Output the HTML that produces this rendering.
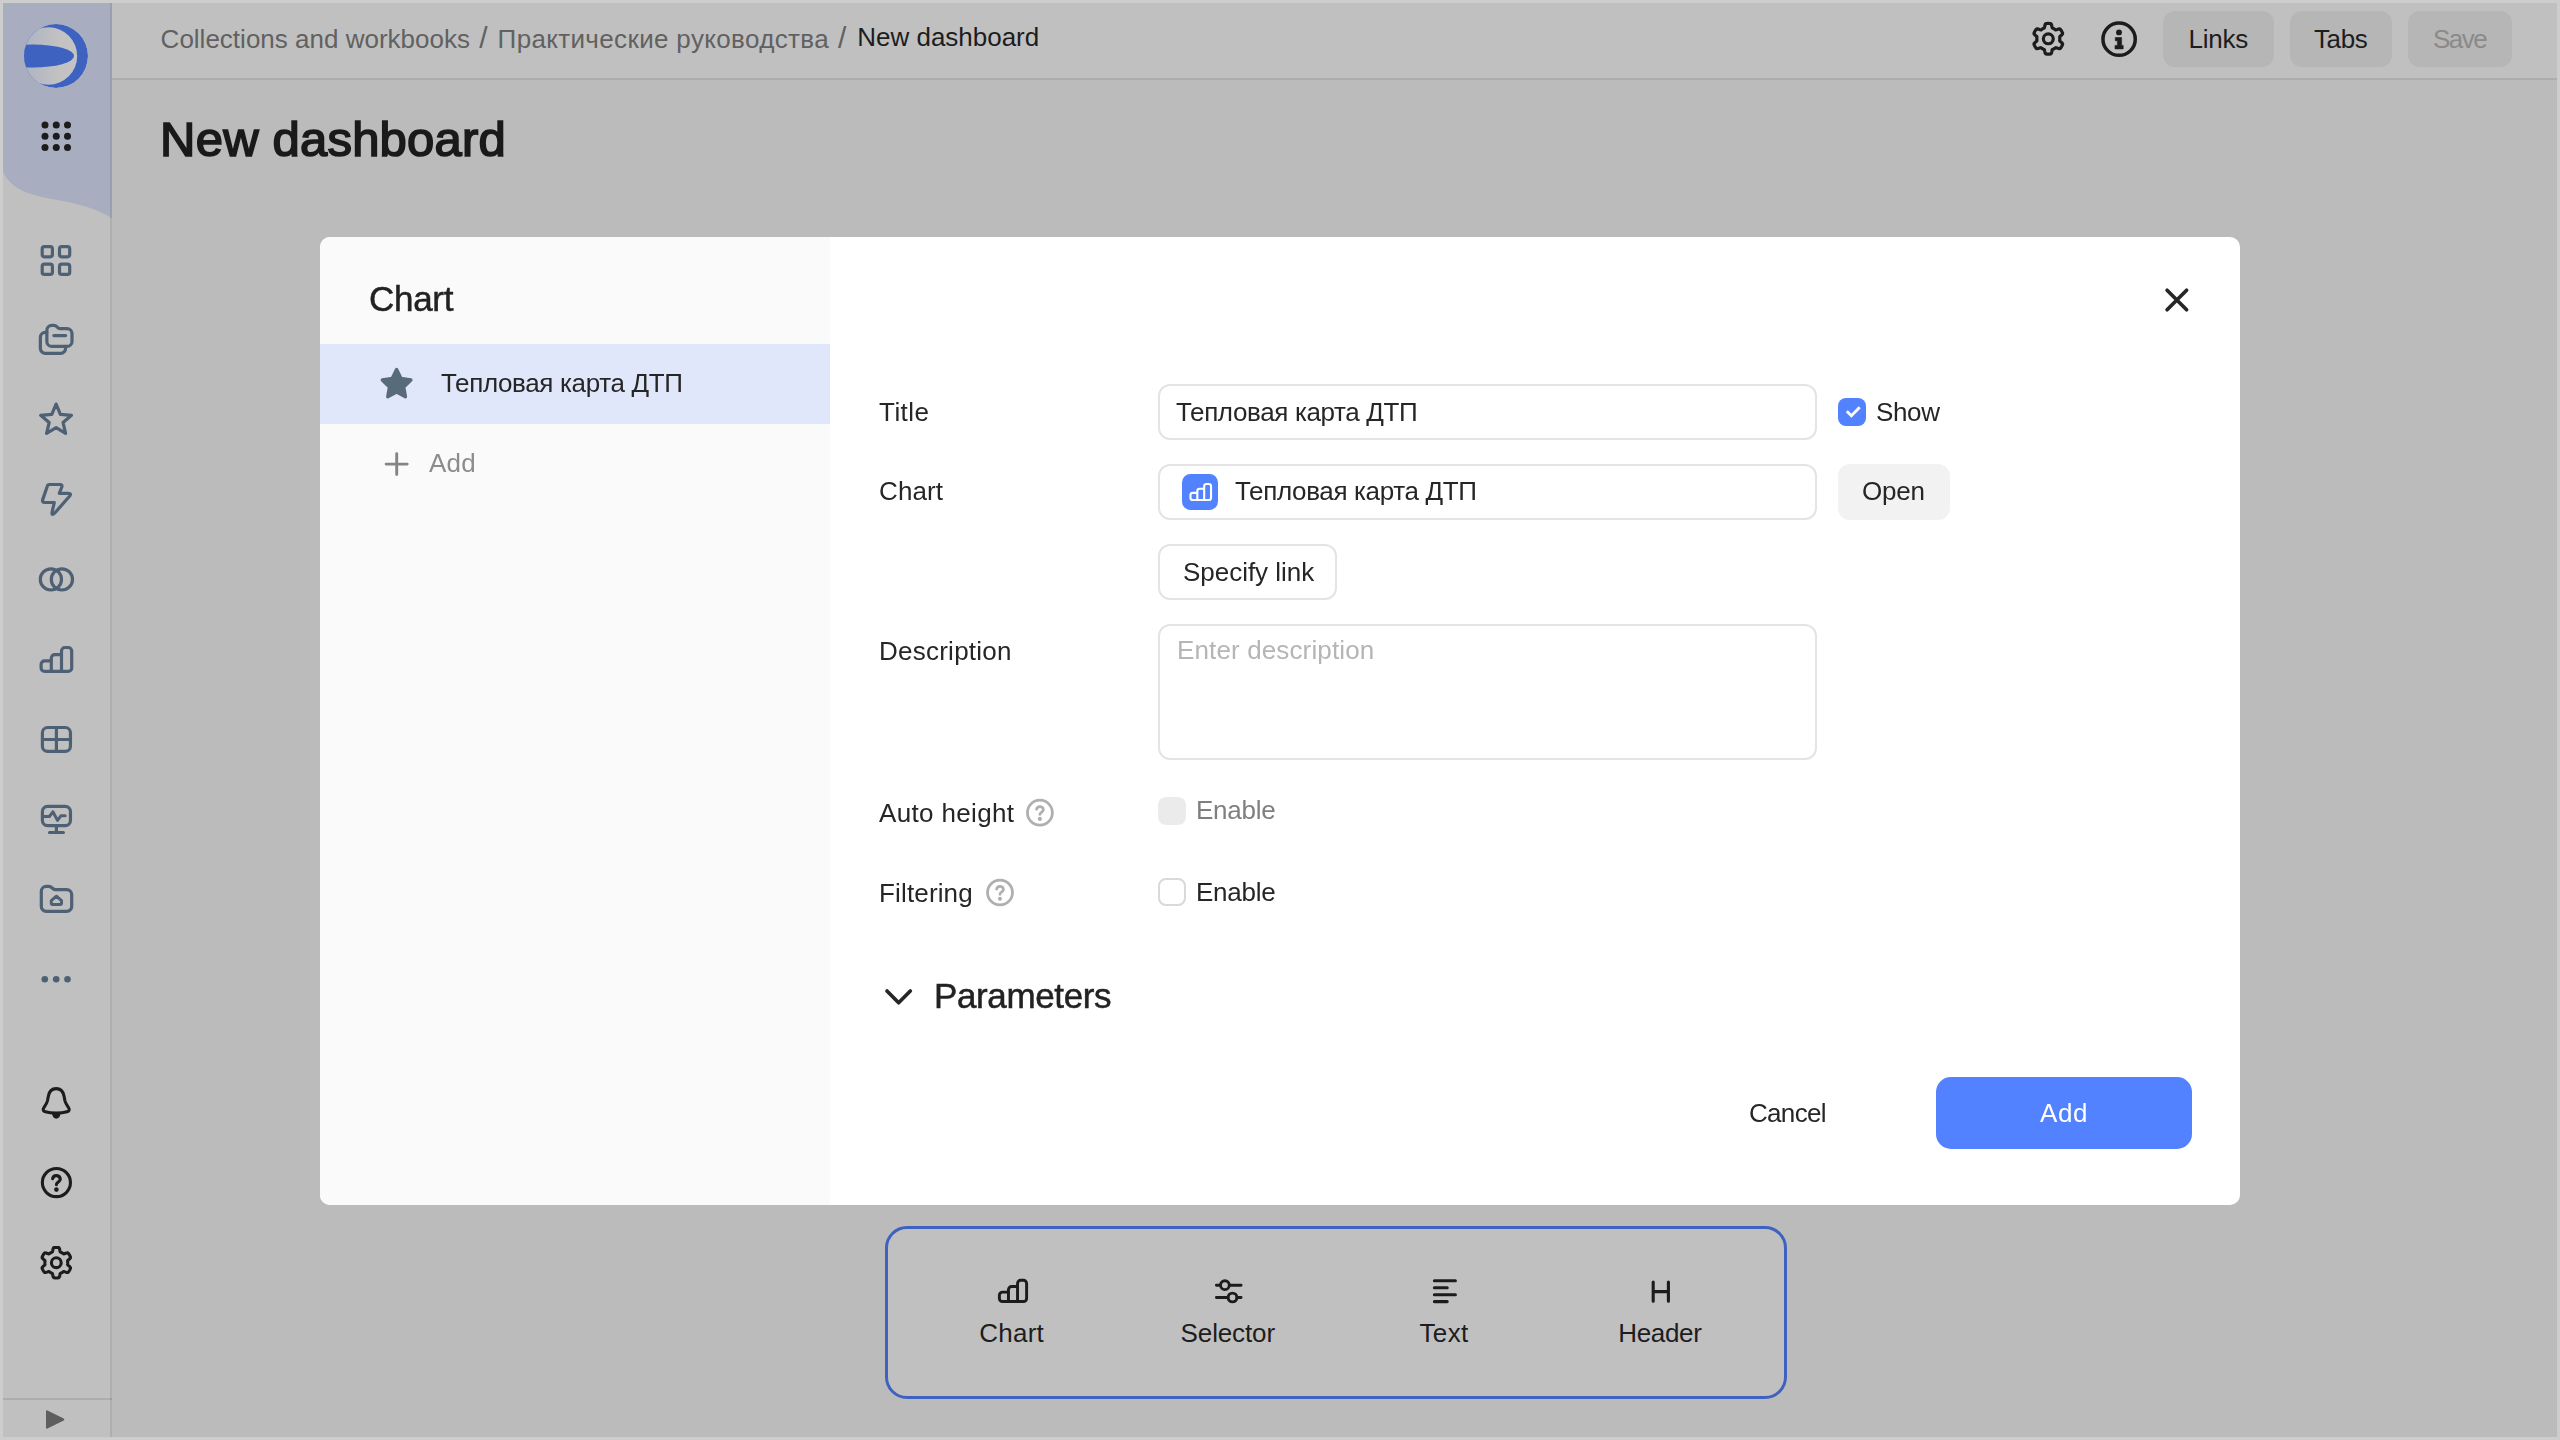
<!DOCTYPE html>
<html lang="en"><head><meta charset="utf-8"><title>New dashboard</title>
<style>
*{box-sizing:border-box;margin:0;padding:0}
html,body{width:2560px;height:1440px;overflow:hidden}
body{position:relative;background:#cdcdcd;font-family:"Liberation Sans",sans-serif;}
.abs,.t,svg{position:absolute}
.t{white-space:nowrap;}
#page{left:3px;top:3px;width:2554px;height:1434px;background:#bbbbbb}
#hdr{left:112px;top:3px;width:2445px;height:76px;background:#c0c0c0;border-bottom:2px solid #adadad;height:77px}
#side{left:3px;top:3px;width:109px;height:1434px;background:#c0c0c0}
#sideb{left:110px;top:3px;width:2px;height:1434px;background:rgba(0,0,0,0.085)}
#sidefoot{left:3px;top:1398px;width:109px;height:2px;background:#adadad}
.hbtn{top:11px;height:56px;border-radius:12px;background:#b6b6b6}
#modal{left:320px;top:237px;width:1920px;height:968px;border-radius:10px;background:#fff;overflow:hidden}
#mleft{left:0;top:0;width:510px;height:968px;background:#fafafa}
#msel{left:0;top:107px;width:510px;height:80px;background:#e1e7fb}
.inp{border:2px solid #e4e4e4;border-radius:12px;background:#fff}
.cb{width:28px;height:28px;border-radius:8px}
#tool{left:885px;top:1226px;width:902px;height:173px;border:3px solid #3e62bf;border-radius:22px;background:#c0c0c0}
.g{will-change:transform}

</style></head>
<body>
<div class="abs" id="page"></div>
<div class="abs" id="hdr"></div>
<div class="abs" id="side"></div>
<div class="abs" id="sidefoot"></div>
<!--SIDEBAR-ICONS-->
<div class="abs hbtn" style="left:2163px;width:111px"></div>
<div class="abs hbtn" style="left:2290px;width:102px"></div>
<div class="abs hbtn" style="left:2408px;width:104px"></div>
<!--HEADER-ICONS-->
<div class="abs" id="tool"></div>
<!--TOOL-ICONS-->
<div class="abs" id="modal">
  <div class="abs" id="mleft"></div>
  <div class="abs" id="msel"></div>
</div>
<div class="abs inp" style="left:1158px;top:384px;width:659px;height:56px"></div>
<div class="abs inp" style="left:1158px;top:464px;width:659px;height:56px"></div>
<div class="abs inp" style="left:1158px;top:544px;width:179px;height:56px"></div>
<div class="abs inp" style="left:1158px;top:624px;width:659px;height:136px"></div>
<div class="abs" style="left:1838px;top:464px;width:112px;height:56px;border-radius:12px;background:#f2f2f2"></div>
<div class="abs cb" style="left:1838px;top:398px;background:#5282ff"></div>
<div class="abs cb" style="left:1158px;top:797px;background:#ebebeb"></div>
<div class="abs cb" style="left:1158px;top:878px;background:#fff;border:2px solid #d9d9d9"></div>
<div class="abs" style="left:1182px;top:473.5px;width:36px;height:36.5px;border-radius:8.5px;background:#5282ff"></div>
<div class="abs" style="left:1936px;top:1077px;width:256px;height:72px;border-radius:15px;background:#5282ff"></div>
<!--MODAL-ICONS-->
<svg style="left:0;top:0" width="2560" height="1440" viewBox="0 0 2560 1440"><path d="M3,3 H112 V218.5 C96,208 78,203.5 52,199 C30,195 12,190 3,172 Z" fill="#a8aebf"/>
<defs><linearGradient id="lg" x1="0" x2="1" y1="0" y2="0"><stop offset="0" stop-color="#aeb3c3"/><stop offset="0.55" stop-color="#c2c2c2"/><stop offset="1" stop-color="#c5c5c5"/></linearGradient><clipPath id="lc"><circle cx="56" cy="56" r="32"/></clipPath></defs>
<circle cx="56" cy="56" r="32" fill="url(#lg)"/>
<g clip-path="url(#lc)" fill="#3e62c0"><path fill-rule="evenodd" d="M56,24 a32,32 0 1 1 0,64 a32,32 0 1 1 0,-64 Z M48.5,27.3 a28.7,28.7 0 1 0 0,57.4 a28.7,28.7 0 1 0 0,-57.4 Z"/><ellipse cx="33" cy="56" rx="41" ry="11.5"/></g>
<path d="M40,28 A32,32 0 0 0 26,45 L26,45 Q40,43 40,28Z" fill="none"/>
<circle cx="45" cy="125" r="3.5" fill="#1c1c1c"/>
<circle cx="56.25" cy="125" r="3.5" fill="#1c1c1c"/>
<circle cx="67.5" cy="125" r="3.5" fill="#1c1c1c"/>
<circle cx="45" cy="136.25" r="3.5" fill="#1c1c1c"/>
<circle cx="56.25" cy="136.25" r="3.5" fill="#1c1c1c"/>
<circle cx="67.5" cy="136.25" r="3.5" fill="#1c1c1c"/>
<circle cx="45" cy="147.5" r="3.5" fill="#1c1c1c"/>
<circle cx="56.25" cy="147.5" r="3.5" fill="#1c1c1c"/>
<circle cx="67.5" cy="147.5" r="3.5" fill="#1c1c1c"/>
<g fill="none" stroke="#4e6074" stroke-width="3.2" stroke-linejoin="round" stroke-linecap="round">
<rect x="42.2" y="246.6" width="10.2" height="10.2" rx="2.2"/>
<rect x="59.5" y="246.6" width="10.2" height="10.2" rx="2.2"/>
<rect x="42.2" y="264.2" width="10.2" height="10.2" rx="2.2"/>
<rect x="59.5" y="264.2" width="10.2" height="10.2" rx="2.2"/>
<path d="M46.85,341.4 V330.4 a5,5 0 0 1 5,-5 H53.6 c2.2,0 3.2,1.2 4.2,2.2 c0.9,0.9 1.6,1.1 2.8,1.1 H67 a5,5 0 0 1 5,5 V341.4 a5,5 0 0 1 -5,5 H51.85 a5,5 0 0 1 -5,-5 Z"/>
<path d="M46.85,332.45 H45.35 a5,5 0 0 0 -5,5 V348.35 a5,5 0 0 0 5,5 H60.6 a5,5 0 0 0 5,-5 V346.4"/>
<path d="M53.9,335.6 H65.6"/>
<polygon points="56.10,404.10 60.39,414.39 71.51,415.29 63.04,422.56 65.62,433.41 56.10,427.60 46.58,433.41 49.16,422.56 40.69,415.29 51.81,414.39"/>
<path d="M49.6,484.5 H60 Q62.6,484.5 61.8,487 L59.3,493.3 H68.3 Q72,493.3 69.5,496.3 L54.6,513.2 Q51.4,516.2 52.1,512 L54.3,502.5 H44.8 Q41.7,502.5 42.8,499.4 L47.2,486.4 Q47.6,484.5 49.6,484.5 Z"/>
<circle cx="50.9" cy="579.4" r="10.6"/><circle cx="61.9" cy="579.4" r="10.6"/>
</g>
<g fill="none" stroke="#4e6074" stroke-width="3.2" stroke-linejoin="round"><path d="M51.3,660.8 H44.6 a3.5,3.5 0 0 0 -3.5,3.5 V667.9 a3.5,3.5 0 0 0 3.5,3.5 H68.2 a3.5,3.5 0 0 0 3.5,-3.5 V651 a3.5,3.5 0 0 0 -3.5,-3.5 H65 a3.5,3.5 0 0 0 -3.5,3.5 V671.4"/><path d="M61.5,654.6 H54.8 a3.5,3.5 0 0 0 -3.5,3.5 V671.4"/></g>
<g fill="none" stroke="#4e6074" stroke-width="3.2" stroke-linejoin="round" stroke-linecap="round">
<rect x="42.4" y="727.5" width="28.05" height="23.9" rx="5.2"/><path d="M56.4,727.5 V751.4 M42.4,739.5 H70.45"/>
<rect x="42.4" y="806.4" width="28.05" height="19.3" rx="5.2"/><path d="M56.4,825.7 V832.5 M49.5,832.5 H63.4"/>
<path d="M42.4,816.5 H49.4 L52.9,811.8 L57.5,820.4 L61,815.7 H65.2" stroke-width="3"/>
<path d="M41.3,906.4 V891.4 a5,5 0 0 1 5,-5 H48.6 c2.2,0 3.2,1.1 4.2,2.1 c0.9,0.9 1.6,1.2 2.8,1.2 H66.7 a5,5 0 0 1 5,5 V906.4 a5,5 0 0 1 -5,5 H46.3 a5,5 0 0 1 -5,-5 Z"/>
<path d="M56.4,896.2 L61.5,900.6 V903.6 a0.9,0.9 0 0 1 -0.9,0.9 H52.2 a0.9,0.9 0 0 1 -0.9,-0.9 V900.6 Z" stroke-width="3"/>
</g>
<circle cx="44.8" cy="979.2" r="3.3" fill="#4e6074"/>
<circle cx="56.2" cy="979.2" r="3.3" fill="#4e6074"/>
<circle cx="67.5" cy="979.2" r="3.3" fill="#4e6074"/>
<path d="M43.9,1107.5 C46,1104.5 46.8,1103.5 47.4,1101 L48.4,1096 C49.2,1091.5 52,1088.6 56.2,1088.6 C60.4,1088.6 63.2,1091.5 64,1096 L65,1101 C65.6,1103.5 66.4,1104.5 68.5,1107.5 C70,1109.8 69,1111.3 67,1111.8 C61,1113.6 51.4,1113.6 45.4,1111.8 C43.4,1111.3 42.4,1109.8 43.9,1107.5 Z" fill="none" stroke="#1c1c1c" stroke-width="3.1" stroke-linejoin="round"/>
<path d="M52,1113.8 Q53,1118.7 56.2,1118.7 Q59.6,1118.7 60.6,1113.8 Z" fill="#1c1c1c"/>
<g fill="none" stroke="#1c1c1c" stroke-width="3.1" stroke-linecap="round"><circle cx="56.4" cy="1182.6" r="14.05"/><path d="M52.6,1178.7 A3.9,3.9 0 0 1 60.3,1179.3 C60.3,1181.9 56.4,1181.8 56.4,1184.6"/></g><circle cx="56.4" cy="1189.6" r="2.3" fill="#1c1c1c"/>
<path d="M67.70,1262.70 L67.70,1262.40 L67.68,1262.10 L67.66,1261.81 L67.64,1261.51 L67.60,1261.21 L67.57,1260.92 L67.69,1260.59 L68.04,1260.20 L68.56,1259.76 L69.17,1259.25 L69.76,1258.71 L70.23,1258.17 L70.50,1257.67 L70.53,1257.24 L70.39,1256.86 L70.23,1256.50 L70.06,1256.13 L69.89,1255.78 L69.70,1255.42 L69.51,1255.08 L69.30,1254.73 L69.09,1254.39 L68.87,1254.06 L68.64,1253.74 L68.40,1253.42 L68.15,1253.11 L67.75,1252.92 L67.18,1252.90 L66.48,1253.04 L65.72,1253.28 L64.98,1253.55 L64.33,1253.78 L63.83,1253.89 L63.48,1253.83 L63.24,1253.66 L63.00,1253.48 L62.76,1253.30 L62.51,1253.14 L62.26,1252.98 L62.00,1252.83 L61.74,1252.68 L61.48,1252.54 L61.21,1252.41 L60.94,1252.29 L60.66,1252.17 L60.39,1252.05 L60.17,1251.78 L60.01,1251.28 L59.88,1250.61 L59.75,1249.83 L59.58,1249.05 L59.34,1248.38 L59.04,1247.89 L58.68,1247.65 L58.29,1247.58 L57.89,1247.53 L57.50,1247.50 L57.10,1247.47 L56.70,1247.46 L56.30,1247.45 L55.90,1247.46 L55.50,1247.47 L55.10,1247.50 L54.71,1247.53 L54.31,1247.58 L53.92,1247.65 L53.56,1247.89 L53.26,1248.38 L53.02,1249.05 L52.85,1249.83 L52.72,1250.61 L52.59,1251.28 L52.43,1251.78 L52.21,1252.05 L51.94,1252.17 L51.66,1252.29 L51.39,1252.41 L51.12,1252.54 L50.86,1252.68 L50.60,1252.83 L50.34,1252.98 L50.09,1253.14 L49.84,1253.30 L49.60,1253.48 L49.36,1253.66 L49.12,1253.83 L48.77,1253.89 L48.27,1253.78 L47.62,1253.55 L46.88,1253.28 L46.12,1253.04 L45.42,1252.90 L44.85,1252.92 L44.45,1253.11 L44.20,1253.42 L43.96,1253.74 L43.73,1254.06 L43.51,1254.39 L43.30,1254.73 L43.09,1255.08 L42.90,1255.42 L42.71,1255.78 L42.54,1256.13 L42.37,1256.50 L42.21,1256.86 L42.07,1257.24 L42.10,1257.67 L42.37,1258.17 L42.84,1258.71 L43.43,1259.25 L44.04,1259.76 L44.56,1260.20 L44.91,1260.59 L45.03,1260.92 L45.00,1261.21 L44.96,1261.51 L44.94,1261.81 L44.92,1262.10 L44.90,1262.40 L44.90,1262.70 L44.90,1263.00 L44.92,1263.30 L44.94,1263.59 L44.96,1263.89 L45.00,1264.19 L45.03,1264.48 L44.91,1264.81 L44.56,1265.20 L44.04,1265.64 L43.43,1266.15 L42.84,1266.69 L42.37,1267.23 L42.10,1267.73 L42.07,1268.16 L42.21,1268.54 L42.37,1268.90 L42.54,1269.27 L42.71,1269.62 L42.90,1269.98 L43.09,1270.33 L43.30,1270.67 L43.51,1271.01 L43.73,1271.34 L43.96,1271.66 L44.20,1271.98 L44.45,1272.29 L44.85,1272.48 L45.42,1272.50 L46.12,1272.36 L46.88,1272.12 L47.62,1271.85 L48.27,1271.62 L48.77,1271.51 L49.12,1271.57 L49.36,1271.74 L49.60,1271.92 L49.84,1272.10 L50.09,1272.26 L50.34,1272.42 L50.60,1272.57 L50.86,1272.72 L51.12,1272.86 L51.39,1272.99 L51.66,1273.11 L51.94,1273.23 L52.21,1273.35 L52.43,1273.62 L52.59,1274.12 L52.72,1274.79 L52.85,1275.57 L53.02,1276.35 L53.26,1277.02 L53.56,1277.51 L53.92,1277.75 L54.31,1277.82 L54.71,1277.87 L55.10,1277.90 L55.50,1277.93 L55.90,1277.94 L56.30,1277.95 L56.70,1277.94 L57.10,1277.93 L57.50,1277.90 L57.89,1277.87 L58.29,1277.82 L58.68,1277.75 L59.04,1277.51 L59.34,1277.02 L59.58,1276.35 L59.75,1275.57 L59.88,1274.79 L60.01,1274.12 L60.17,1273.62 L60.39,1273.35 L60.66,1273.23 L60.94,1273.11 L61.21,1272.99 L61.48,1272.86 L61.74,1272.72 L62.00,1272.57 L62.26,1272.42 L62.51,1272.26 L62.76,1272.10 L63.00,1271.92 L63.24,1271.74 L63.48,1271.57 L63.83,1271.51 L64.33,1271.62 L64.98,1271.85 L65.72,1272.12 L66.48,1272.36 L67.18,1272.50 L67.75,1272.48 L68.15,1272.29 L68.40,1271.98 L68.64,1271.66 L68.87,1271.34 L69.09,1271.01 L69.30,1270.67 L69.51,1270.33 L69.70,1269.98 L69.89,1269.62 L70.06,1269.27 L70.23,1268.90 L70.39,1268.54 L70.53,1268.16 L70.50,1267.73 L70.23,1267.23 L69.76,1266.69 L69.17,1266.15 L68.56,1265.64 L68.04,1265.20 L67.69,1264.81 L67.57,1264.48 L67.60,1264.19 L67.64,1263.89 L67.66,1263.59 L67.68,1263.30 L67.70,1263.00Z" fill="none" stroke="#1c1c1c" stroke-width="3.1" stroke-linejoin="round"/><circle cx="56.3" cy="1262.7" r="4.9" fill="none" stroke="#1c1c1c" stroke-width="3.1"/>
<path d="M47,1411.3 L63.3,1419.5 L47,1427.7 Z" fill="#5e5e5e" stroke="#5e5e5e" stroke-width="2" stroke-linejoin="round"/>
<path d="M2059.80,38.80 L2059.80,38.50 L2059.78,38.20 L2059.76,37.90 L2059.74,37.60 L2059.70,37.30 L2059.67,37.00 L2059.79,36.67 L2060.14,36.28 L2060.66,35.83 L2061.27,35.33 L2061.86,34.78 L2062.32,34.24 L2062.59,33.74 L2062.62,33.30 L2062.48,32.93 L2062.32,32.56 L2062.15,32.19 L2061.98,31.83 L2061.79,31.48 L2061.59,31.12 L2061.39,30.78 L2061.17,30.44 L2060.95,30.11 L2060.72,29.78 L2060.48,29.46 L2060.22,29.14 L2059.83,28.95 L2059.26,28.93 L2058.56,29.07 L2057.79,29.31 L2057.05,29.58 L2056.40,29.80 L2055.89,29.91 L2055.54,29.86 L2055.30,29.68 L2055.06,29.50 L2054.81,29.32 L2054.56,29.16 L2054.31,28.99 L2054.05,28.84 L2053.79,28.69 L2053.52,28.55 L2053.25,28.42 L2052.98,28.29 L2052.70,28.18 L2052.42,28.06 L2052.20,27.78 L2052.04,27.29 L2051.91,26.61 L2051.77,25.83 L2051.60,25.05 L2051.37,24.38 L2051.06,23.89 L2050.70,23.65 L2050.30,23.58 L2049.90,23.53 L2049.50,23.50 L2049.10,23.47 L2048.70,23.46 L2048.30,23.45 L2047.90,23.46 L2047.50,23.47 L2047.10,23.50 L2046.70,23.53 L2046.30,23.58 L2045.90,23.65 L2045.54,23.89 L2045.23,24.38 L2045.00,25.05 L2044.83,25.83 L2044.69,26.61 L2044.56,27.29 L2044.40,27.78 L2044.18,28.06 L2043.90,28.18 L2043.62,28.29 L2043.35,28.42 L2043.08,28.55 L2042.81,28.69 L2042.55,28.84 L2042.29,28.99 L2042.04,29.16 L2041.79,29.32 L2041.54,29.50 L2041.30,29.68 L2041.06,29.86 L2040.71,29.91 L2040.20,29.80 L2039.55,29.58 L2038.81,29.31 L2038.04,29.07 L2037.34,28.93 L2036.77,28.95 L2036.38,29.14 L2036.12,29.46 L2035.88,29.78 L2035.65,30.11 L2035.43,30.44 L2035.21,30.78 L2035.01,31.12 L2034.81,31.48 L2034.62,31.83 L2034.45,32.19 L2034.28,32.56 L2034.12,32.93 L2033.98,33.30 L2034.01,33.74 L2034.28,34.24 L2034.74,34.78 L2035.33,35.33 L2035.94,35.83 L2036.46,36.28 L2036.81,36.67 L2036.93,37.00 L2036.90,37.30 L2036.86,37.60 L2036.84,37.90 L2036.82,38.20 L2036.80,38.50 L2036.80,38.80 L2036.80,39.10 L2036.82,39.40 L2036.84,39.70 L2036.86,40.00 L2036.90,40.30 L2036.93,40.60 L2036.81,40.93 L2036.46,41.32 L2035.94,41.77 L2035.33,42.27 L2034.74,42.82 L2034.28,43.36 L2034.01,43.86 L2033.98,44.30 L2034.12,44.67 L2034.28,45.04 L2034.45,45.41 L2034.62,45.77 L2034.81,46.12 L2035.01,46.47 L2035.21,46.82 L2035.43,47.16 L2035.65,47.49 L2035.88,47.82 L2036.12,48.14 L2036.38,48.46 L2036.77,48.65 L2037.34,48.67 L2038.04,48.53 L2038.81,48.29 L2039.55,48.02 L2040.20,47.80 L2040.71,47.69 L2041.06,47.74 L2041.30,47.92 L2041.54,48.10 L2041.79,48.28 L2042.04,48.44 L2042.29,48.61 L2042.55,48.76 L2042.81,48.91 L2043.08,49.05 L2043.35,49.18 L2043.62,49.31 L2043.90,49.42 L2044.18,49.54 L2044.40,49.82 L2044.56,50.31 L2044.69,50.99 L2044.83,51.77 L2045.00,52.55 L2045.23,53.22 L2045.54,53.71 L2045.90,53.95 L2046.30,54.02 L2046.70,54.07 L2047.10,54.10 L2047.50,54.13 L2047.90,54.14 L2048.30,54.15 L2048.70,54.14 L2049.10,54.13 L2049.50,54.10 L2049.90,54.07 L2050.30,54.02 L2050.70,53.95 L2051.06,53.71 L2051.37,53.22 L2051.60,52.55 L2051.77,51.77 L2051.91,50.99 L2052.04,50.31 L2052.20,49.82 L2052.42,49.54 L2052.70,49.42 L2052.98,49.31 L2053.25,49.18 L2053.52,49.05 L2053.79,48.91 L2054.05,48.76 L2054.31,48.61 L2054.56,48.44 L2054.81,48.28 L2055.06,48.10 L2055.30,47.92 L2055.54,47.74 L2055.89,47.69 L2056.40,47.80 L2057.05,48.02 L2057.79,48.29 L2058.56,48.53 L2059.26,48.67 L2059.83,48.65 L2060.22,48.46 L2060.48,48.14 L2060.72,47.82 L2060.95,47.49 L2061.17,47.16 L2061.39,46.82 L2061.59,46.47 L2061.79,46.12 L2061.98,45.77 L2062.15,45.41 L2062.32,45.04 L2062.48,44.67 L2062.62,44.30 L2062.59,43.86 L2062.32,43.36 L2061.86,42.82 L2061.27,42.27 L2060.66,41.77 L2060.14,41.32 L2059.79,40.93 L2059.67,40.60 L2059.70,40.30 L2059.74,40.00 L2059.76,39.70 L2059.78,39.40 L2059.80,39.10Z" fill="none" stroke="#1c1c1c" stroke-width="3.2" stroke-linejoin="round"/><circle cx="2048.3" cy="38.8" r="4.95" fill="none" stroke="#1c1c1c" stroke-width="3.2"/>
<circle cx="2119.1" cy="39.2" r="16.15" fill="none" stroke="#1c1c1c" stroke-width="3.5"/>
<circle cx="2119" cy="32.4" r="2.95" fill="#1c1c1c"/>
<path d="M2115.3,37.5 H2121.6 V45.4 H2123.2 V48.9 H2115 V45.4 H2117.4 V40.8 H2115.3 Z" fill="#1c1c1c" stroke="#1c1c1c" stroke-width="0.6" stroke-linejoin="round"/>
<polygon points="396.60,369.60 401.01,378.53 410.87,379.96 403.73,386.92 405.42,396.74 396.60,392.10 387.78,396.74 389.47,386.92 382.33,379.96 392.19,378.53" fill="#586b7d" stroke="#586b7d" stroke-width="3.4" stroke-linejoin="round"/>
<path d="M396.7,453.6 V474.6 M386.1,464.1 H407.2" stroke="#858585" stroke-width="2.9" stroke-linecap="round" fill="none"/>
<path d="M2167.1,290.2 L2186.6,309.7 M2186.6,290.2 L2167.1,309.7" stroke="#262626" stroke-width="3.7" stroke-linecap="round" fill="none"/>
<g transform="translate(1200.75,492) scale(0.672) translate(-56.4,-659.45)"><g fill="none" stroke="#fff" stroke-width="3.2" stroke-linejoin="round"><path d="M51.3,660.8 H44.6 a3.5,3.5 0 0 0 -3.5,3.5 V667.9 a3.5,3.5 0 0 0 3.5,3.5 H68.2 a3.5,3.5 0 0 0 3.5,-3.5 V651 a3.5,3.5 0 0 0 -3.5,-3.5 H65 a3.5,3.5 0 0 0 -3.5,3.5 V671.4"/><path d="M61.5,654.6 H54.8 a3.5,3.5 0 0 0 -3.5,3.5 V671.4"/></g></g>
<path d="M1846.8,411.2 L1851.4,415.8 L1859.7,407.2" stroke="#fff" stroke-width="2.8" fill="none"/>
<g transform="translate(1039.9,812.7) scale(0.888) translate(-56.4,-1182.6)"><g fill="none" stroke="#afafaf" stroke-width="3.1" stroke-linecap="round"><circle cx="56.4" cy="1182.6" r="14.05"/><path d="M52.6,1178.7 A3.9,3.9 0 0 1 60.3,1179.3 C60.3,1181.9 56.4,1181.8 56.4,1184.6"/></g><circle cx="56.4" cy="1189.6" r="2.3" fill="#afafaf"/></g>
<g transform="translate(1000,892.5) scale(0.888) translate(-56.4,-1182.6)"><g fill="none" stroke="#afafaf" stroke-width="3.1" stroke-linecap="round"><circle cx="56.4" cy="1182.6" r="14.05"/><path d="M52.6,1178.7 A3.9,3.9 0 0 1 60.3,1179.3 C60.3,1181.9 56.4,1181.8 56.4,1184.6"/></g><circle cx="56.4" cy="1189.6" r="2.3" fill="#afafaf"/></g>
<path d="M887,991 L898.65,1002.7 L910.3,991" stroke="#262626" stroke-width="3.7" stroke-linecap="round" stroke-linejoin="round" fill="none"/>
<g transform="translate(1013,1290.9) scale(0.89) translate(-56.4,-659.45)"><g fill="none" stroke="#1c1c1c" stroke-width="3.3" stroke-linejoin="round"><path d="M51.3,660.8 H44.6 a3.5,3.5 0 0 0 -3.5,3.5 V667.9 a3.5,3.5 0 0 0 3.5,3.5 H68.2 a3.5,3.5 0 0 0 3.5,-3.5 V651 a3.5,3.5 0 0 0 -3.5,-3.5 H65 a3.5,3.5 0 0 0 -3.5,3.5 V671.4"/><path d="M61.5,654.6 H54.8 a3.5,3.5 0 0 0 -3.5,3.5 V671.4"/></g></g>
<g fill="none" stroke="#1c1c1c" stroke-width="2.9" stroke-linecap="round"><path d="M1216.4,1285.2 H1220.5 M1229.3,1285.2 H1241.1 M1216.4,1297.5 H1228.1 M1236.9,1297.5 H1241.1"/><circle cx="1224.9" cy="1285.2" r="4.4"/><circle cx="1232.5" cy="1297.5" r="4.4"/></g>
<path d="M1434.4,1280.7 H1455.4 M1434.4,1287.8 H1447.2 M1434.4,1294.7 H1455.4 M1434.4,1301.6 H1447.2" stroke="#1c1c1c" stroke-width="3.1" stroke-linecap="round" fill="none"/>
<path d="M1653.2,1282 V1301.3 M1668.4,1282 V1301.3 M1653.2,1291.6 H1668.4" stroke="#1c1c1c" stroke-width="3.1" stroke-linecap="round" fill="none"/></svg>
<div class="abs" id="sideb"></div>

<div class="t" id="bc1" style="left:160.60px;top:20.59px;font-size:26px;line-height:36px;color:#616161;letter-spacing:0.005px;">Collections and workbooks</div>
<div class="t" id="bs1" style="left:479.30px;top:17.00px;font-size:30px;line-height:42px;color:#616161;letter-spacing:1.556px;">/</div>
<div class="t" id="bc2" style="left:497.60px;top:20.59px;font-size:26px;line-height:36px;color:#616161;letter-spacing:0.345px;">Практические руководства</div>
<div class="t" id="bs2" style="left:838.00px;top:17.00px;font-size:30px;line-height:42px;color:#616161;letter-spacing:1.356px;">/</div>
<div class="t" id="bc3" style="left:857.30px;top:19.29px;font-size:26px;line-height:36px;color:#1d1d1d;letter-spacing:-0.019px;">New dashboard</div>
<div class="t" id="ttl" style="left:160.10px;top:105.21px;font-size:49px;line-height:69px;color:#1a1a1a;-webkit-text-stroke:1.7px #1a1a1a;letter-spacing:0.203px;">New dashboard</div>
<div class="t" id="links" style="left:2188.50px;top:20.99px;font-size:26px;line-height:36px;color:#1d1d1d;letter-spacing:-0.238px;">Links</div>
<div class="t" id="tabs" style="left:2313.90px;top:20.99px;font-size:26px;line-height:36px;color:#1d1d1d;letter-spacing:-0.341px;">Tabs</div>
<div class="t" id="save" style="left:2433.00px;top:20.99px;font-size:26px;line-height:36px;color:#8a8a8a;letter-spacing:-1.489px;">Save</div>
<div class="t g" id="mh" style="left:368.80px;top:274.17px;font-size:35px;line-height:49px;color:#222;-webkit-text-stroke:0.5px #222;letter-spacing:-0.298px;">Chart</div>
<div class="t g" id="li" style="left:441.00px;top:364.99px;font-size:26px;line-height:36px;color:#262626;letter-spacing:-0.356px;">Тепловая карта ДТП</div>
<div class="t g" id="ladd" style="left:429.00px;top:444.89px;font-size:26px;line-height:36px;color:#8c8c8c;letter-spacing:0.217px;">Add</div>
<div class="t g" id="f1" style="left:878.75px;top:394.24px;font-size:26px;line-height:36px;color:#262626;letter-spacing:0.461px;">Title</div>
<div class="t g" id="f1v" style="left:1176.25px;top:394.24px;font-size:26px;line-height:36px;color:#262626;letter-spacing:-0.365px;">Тепловая карта ДТП</div>
<div class="t g" id="show" style="left:1876.00px;top:394.24px;font-size:26px;line-height:36px;color:#262626;letter-spacing:-0.349px;">Show</div>
<div class="t g" id="f2" style="left:878.50px;top:473.49px;font-size:26px;line-height:36px;color:#262626;letter-spacing:0.105px;">Chart</div>
<div class="t g" id="f2v" style="left:1235.00px;top:473.49px;font-size:26px;line-height:36px;color:#262626;letter-spacing:-0.350px;">Тепловая карта ДТП</div>
<div class="t g" id="open" style="left:1862.00px;top:473.49px;font-size:26px;line-height:36px;color:#262626;letter-spacing:-0.203px;">Open</div>
<div class="t g" id="spec" style="left:1182.50px;top:554.24px;font-size:26px;line-height:36px;color:#262626;letter-spacing:-0.023px;">Specify link</div>
<div class="t g" id="f3" style="left:878.50px;top:633.49px;font-size:26px;line-height:36px;color:#262626;letter-spacing:0.244px;">Description</div>
<div class="t g" id="f3p" style="left:1176.60px;top:631.99px;font-size:26px;line-height:36px;color:#b5b5b5;letter-spacing:0.131px;">Enter description</div>
<div class="t g" id="f4" style="left:878.50px;top:795.19px;font-size:26px;line-height:36px;color:#262626;letter-spacing:0.344px;">Auto height</div>
<div class="t g" id="en1" style="left:1195.80px;top:791.79px;font-size:26px;line-height:36px;color:#7f7f7f;letter-spacing:-0.234px;">Enable</div>
<div class="t g" id="f5" style="left:878.50px;top:875.29px;font-size:26px;line-height:36px;color:#262626;letter-spacing:0.152px;">Filtering</div>
<div class="t g" id="en2" style="left:1195.80px;top:873.99px;font-size:26px;line-height:36px;color:#262626;letter-spacing:-0.234px;">Enable</div>
<div class="t g" id="par" style="left:934.40px;top:970.67px;font-size:35px;line-height:49px;color:#222;-webkit-text-stroke:0.5px #222;letter-spacing:-0.367px;">Parameters</div>
<div class="t g" id="cancel" style="left:1749.25px;top:1094.99px;font-size:26px;line-height:36px;color:#262626;letter-spacing:-0.688px;">Cancel</div>
<div class="t g" id="addb" style="left:2040.00px;top:1094.99px;font-size:26px;line-height:36px;color:#fff;letter-spacing:0.617px;">Add</div>
<div class="t" id="tb1" style="left:979.25px;top:1315.49px;font-size:26px;line-height:36px;color:#1d1d1d;letter-spacing:0.230px;">Chart</div>
<div class="t" id="tb2" style="left:1180.60px;top:1315.49px;font-size:26px;line-height:36px;color:#1d1d1d;letter-spacing:-0.127px;">Selector</div>
<div class="t" id="tb3" style="left:1419.50px;top:1315.49px;font-size:26px;line-height:36px;color:#1d1d1d;letter-spacing:0.354px;">Text</div>
<div class="t" id="tb4" style="left:1618.25px;top:1315.49px;font-size:26px;line-height:36px;color:#1d1d1d;letter-spacing:-0.326px;">Header</div>
</body></html>
